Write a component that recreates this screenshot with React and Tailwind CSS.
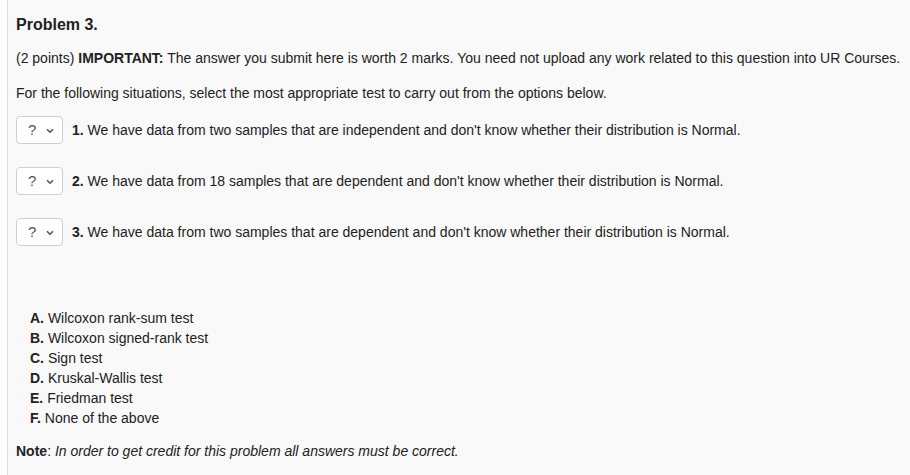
import React from "react";

function Sel() {
  return (
    <div className="flex items-center justify-between w-[47px] h-[28px] border border-[#cfcfcf] rounded-[4px] bg-white pl-[11px] pr-[8px] shrink-0">
      <span className="text-[15px] text-[#555] font-light">?</span>
      <svg width="8" height="6" viewBox="0 0 8 6" className="mt-[1px]">
        <path d="M1 1.2 L4 4.2 L7 1.2" fill="none" stroke="#555" strokeWidth="1.6" />
      </svg>
    </div>
  );
}

export default function App() {
  const rows = [
    "We have data from two samples that are independent and don't know whether their distribution is Normal.",
    "We have data from 18 samples that are dependent and don't know whether their distribution is Normal.",
    "We have data from two samples that are dependent and don't know whether their distribution is Normal.",
  ];
  const opts = [
    ["A.", "Wilcoxon rank-sum test"],
    ["B.", "Wilcoxon signed-rank test"],
    ["C.", "Sign test"],
    ["D.", "Kruskal-Wallis test"],
    ["E.", "Friedman test"],
    ["F.", "None of the above"],
  ];
  return (
    <div
      className="w-[910px] h-[475px] bg-white pl-[7px] overflow-hidden"
      style={{ fontFamily: '"Liberation Sans", Arial, sans-serif' }}
    >
      <div className="h-full border-l border-[#dcdcdc] bg-[#f9f9f9] pl-[8px] pt-[15px] text-[#222] text-[14px]">
        <div className="text-[16px] font-bold leading-[20px]">Problem 3.</div>
        <p className="leading-[20px] mt-[13px]">
          (2 points) <b>IMPORTANT:</b> The answer you submit here is worth 2 marks. You need not upload any work related to this question into UR Courses.
        </p>
        <p className="leading-[20px] mt-[15px]">
          For the following situations, select the most appropriate test to carry out from the options below.
        </p>
        <div className="mt-[13px] flex flex-col gap-[23px]">
          {rows.map((r, i) => (
            <div key={i} className="flex items-center gap-[9px] h-[28px]">
              <Sel />
              <span className="leading-[20px]">
                <b>{i + 1}.</b> {r}
              </span>
            </div>
          ))}
        </div>
        <div className="mt-[62px] pl-[14px]">
          {opts.map(([k, v]) => (
            <div key={k} className="leading-[20px]">
              <b>{k}</b> {v}
            </div>
          ))}
        </div>
        <p className="leading-[20px] mt-[13px]">
          <b>Note</b>: <i>In order to get credit for this problem all answers must be correct.</i>
        </p>
      </div>
    </div>
  );
}
